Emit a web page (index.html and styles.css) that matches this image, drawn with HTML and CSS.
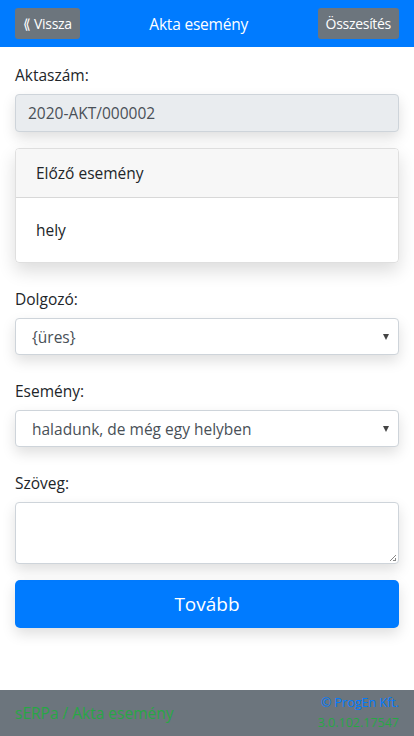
FILE: index.html
```html
<!DOCTYPE html>
<html lang="hu">
<head>
<meta charset="utf-8">
<title>Akta esemény</title>
<link rel="stylesheet" href="styles.css">
</head>
<body>
<div class="page">
  <header class="navbar">
    <button class="nav-btn">&#x27EA; Vissza</button>
    <div class="nav-title">Akta esemény</div>
    <button class="nav-btn">Összesítés</button>
  </header>
  <main class="content">
    <div class="group">
      <label class="label">Aktaszám:</label>
      <div class="control readonly">2020-AKT/000002</div>
    </div>
    <div class="card">
      <div class="card-header">Előző esemény</div>
      <div class="card-body">hely</div>
    </div>
    <div class="group wide">
      <label class="label">Dolgozó:</label>
      <div class="control select"><span>{üres}</span><span class="caret"></span></div>
    </div>
    <div class="group wide">
      <label class="label">Esemény:</label>
      <div class="control select"><span>haladunk, de még egy helyben</span><span class="caret"></span></div>
    </div>
    <div class="group wide">
      <label class="label">Szöveg:</label>
      <div class="control textarea"><span class="grip"></span></div>
    </div>
    <button class="primary">Tovább</button>
  </main>
  <footer class="footer">
    <div class="footer-left">sERPa / Akta esemény</div>
    <div class="footer-right">
      <div class="copy">© ProgEn Kft.</div>
      <div class="ver">3.0.102.17547</div>
    </div>
  </footer>
</div>
</body>
</html>
```

FILE: styles.css
```css
* { box-sizing: border-box; }
html, body { margin: 0; padding: 0; }
body {
  font-family: "Open Sans", "Noto Sans", sans-serif;
  font-size: 15.5px;
  color: #212529;
  background: #fff;
}
.page {
  width: 414px;
  height: 736px;
  display: flex;
  flex-direction: column;
}
.navbar {
  height: 47px;
  background: #007bff;
  display: flex;
  align-items: center;
  justify-content: space-between;
  padding: 0 15px;
}
.nav-btn {
  font-family: inherit;
  font-size: 14px;
  color: #fff;
  background: #6c757d;
  border: none;
  border-radius: 3px;
  height: 31px;
  padding: 0 8px;
  letter-spacing: -0.3px;
}
.nav-title {
  color: #fff;
  font-size: 15.5px;
  letter-spacing: -0.2px;
}
.content {
  flex: 1;
  padding: 16px 15px 0;
  display: flex;
  flex-direction: column;
}
.group { margin-bottom: 16px; }
.group.wide { margin-top: 24px; margin-bottom: 0; }
.label {
  display: block;
  line-height: 24px;
  margin-bottom: 7px;
}
.control {
  border: 1px solid #ced4da;
  border-radius: 4px;
  height: 38px;
  display: flex;
  align-items: center;
  padding: 0 12px;
  color: #495057;
  box-shadow: 0 6px 14px rgba(0,0,0,0.13);
  background: #fff;
}
.readonly { background: #e9ecef; }
.select { padding-left: 16px; justify-content: space-between; height: 37px; }
.caret {
  width: 0; height: 0;
  border-left: 3.5px solid transparent;
  border-right: 3.5px solid transparent;
  border-top: 6px solid #444;
  margin-right: -3px;
}
.textarea {
  height: 62px;
  position: relative;
}
.grip {
  position: absolute;
  right: 2px;
  bottom: 2px;
  width: 6px;
  height: 6px;
  background: linear-gradient(135deg, transparent 45%, #888 45%, #888 55%, transparent 55%, transparent 75%, #888 75%);
}
.card {
  border: 1px solid rgba(0,0,0,0.125);
  border-radius: 4px;
  box-shadow: 0 8px 18px rgba(0,0,0,0.14);
  overflow: hidden;
}
.card-header {
  background: #f7f7f7;
  height: 49px;
  display: flex;
  align-items: center;
  padding: 0 20px;
  border-bottom: 1px solid rgba(0,0,0,0.125);
}
.card-body {
  height: 64px;
  display: flex;
  align-items: center;
  padding: 0 20px;
}
.primary {
  margin-top: 16px;
  height: 48px;
  border: none;
  border-radius: 5px;
  background: #007bff;
  color: #fff;
  font-family: inherit;
  font-size: 19px;
  box-shadow: 0 6px 14px rgba(0,0,0,0.13);
}
.footer {
  height: 46px;
  background: #6c757d;
  display: flex;
  align-items: center;
  justify-content: space-between;
  padding: 0 15px;
}
.footer-left {
  color: #28a745;
  font-size: 15.5px;
}
.footer-right {
  text-align: right;
  font-size: 12.5px;
  line-height: 20px;
}
.copy { color: #007bff; }
.ver { color: #28a745; }
```
